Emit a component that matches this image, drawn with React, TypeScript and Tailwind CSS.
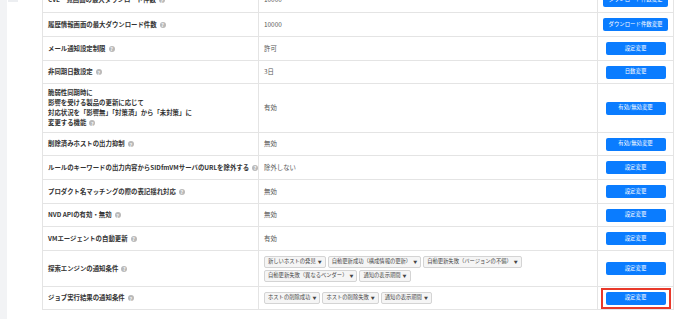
import React from 'react'

type Row = {
    label: string[]
    value?: string
    tags?: string[][]
    button: string
    wide?: boolean
    h: string
    highlight?: boolean
}

const rows: Row[] = [
    { label: ['CVE一覧画面の最大ダウンロード件数'], value: '10000', button: 'ダウンロード件数変更', wide: true, h: 'h-[24px]' },
    { label: ['履歴情報画面の最大ダウンロード件数'], value: '10000', button: 'ダウンロード件数変更', wide: true, h: 'h-[24px]' },
    { label: ['メール通知設定制限'], value: '許可', button: '設定変更', h: 'h-[24px]' },
    { label: ['非同期日数設定'], value: '3日', button: '日数変更', h: 'h-[23px]' },
    {
        label: [
            '脆弱性同期時に',
            '影響を受ける製品の更新に応じて',
            '対応状況を「影響無」「対策済」から「未対策」に',
            '変更する機能',
        ],
        value: '有効',
        button: '有効/無効変更',
        h: 'h-[49px]',
    },
    { label: ['削除済みホストの出力抑制'], value: '無効', button: '有効/無効変更', h: 'h-[23px]' },
    { label: ['ルールのキーワードの出力内容からSIDfmVMサーバのURLを除外する'], value: '除外しない', button: '設定変更', h: 'h-[24px]' },
    { label: ['プロダクト名マッチングの際の表記揺れ対応'], value: '無効', button: '設定変更', h: 'h-[24px]' },
    { label: ['NVD APIの有効・無効'], value: '無効', button: '設定変更', h: 'h-[23px]' },
    { label: ['VMエージェントの自動更新'], value: '有効', button: '設定変更', h: 'h-[24px]' },
    {
        label: ['探索エンジンの通知条件'],
        tags: [
            ['新しいホストの発見', '自動更新成功（構成情報の更新）', '自動更新失敗（バージョンの不備）'],
            ['自動更新失敗（異なるベンダー）', '通知の表示期間'],
        ],
        button: '設定変更',
        h: 'h-[36px]',
    },
    {
        label: ['ジョブ実行結果の通知条件'],
        tags: [['ホストの削除成功', 'ホストの削除失敗', '通知の表示期間']],
        button: '設定変更',
        h: 'h-[23px]',
        highlight: true,
    },
]

const Help = () => (
    <span className="ml-[3px] inline-flex h-[6px] w-[6px] items-center justify-center rounded-full bg-[#b9b9b9] align-middle text-[5px] font-bold leading-none text-white">
        ?
    </span>
)

const Tag = ({ text }: { text: string }) => (
    <span className="inline-flex h-[12px] items-center gap-[2px] rounded-[2px] border border-[#d4d4d4] bg-[#f5f5f5] px-[3px] text-[5.3px] leading-none text-[#444]">
        {text}
        <span className="text-[4px]">▼</span>
    </span>
)

const Button = ({ text, wide }: { text: string; wide?: boolean }) => (
    <button
        className={
            (wide ? 'w-[65px]' : 'w-[60px]') +
            ' flex h-[13px] items-center justify-center rounded-[2px] bg-[#0a7cff] text-[5.4px] leading-none text-white'
        }
    >
        {text}
    </button>
)

export default function App() {
    return (
        <div
            className="flex min-h-[319px] overflow-hidden bg-white"
            style={{ fontFamily: '"Noto Sans CJK JP", "Noto Sans", sans-serif' }}
        >
            <div className="w-[7px] shrink-0 bg-[#f2f3f5]" />
            <div className="flex-1">
                <div className="ml-[1px] h-[2px] w-[10px] bg-[#eceef1]" />
                <div className="-mt-[15px] ml-[35px] w-[632px] border border-[#e4e4e4]">
                    {rows.map((r, i) => (
                        <div
                            key={i}
                            className={
                                r.h +
                                ' grid grid-cols-[216px_339px_1fr] ' +
                                (i > 0 ? 'border-t border-[#e4e4e4]' : '')
                            }
                        >
                            <div className="flex flex-col justify-center border-r border-[#e4e4e4] pl-[5px] text-[6.4px] font-bold leading-[10px] text-[#333]">
                                {r.label.map((l, j) => (
                                    <div key={j} className="whitespace-nowrap">
                                        {l}
                                        {j === r.label.length - 1 && <Help />}
                                    </div>
                                ))}
                            </div>
                            <div className="flex flex-col justify-center border-r border-[#e4e4e4] pl-[5px] text-[6.4px] text-[#555]">
                                {r.value && <span>{r.value}</span>}
                                {r.tags && (
                                    <div className="flex flex-col gap-[2px]">
                                        {r.tags.map((line, j) => (
                                            <div key={j} className="flex gap-[2px]">
                                                {line.map((t) => (
                                                    <Tag key={t} text={t} />
                                                ))}
                                            </div>
                                        ))}
                                    </div>
                                )}
                            </div>
                            <div className="flex items-center justify-center">
                                {r.highlight ? (
                                    <div className="border-2 border-[#e8392b] px-[3px] py-[2px]">
                                        <Button text={r.button} />
                                    </div>
                                ) : (
                                    <Button text={r.button} wide={r.wide} />
                                )}
                            </div>
                        </div>
                    ))}
                </div>
            </div>
        </div>
    )
}
